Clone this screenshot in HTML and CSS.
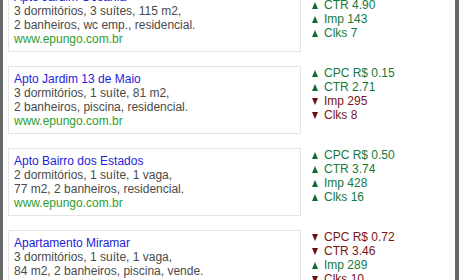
FILE: index.html
```html
<!DOCTYPE html>
<html>
<head>
	<title>Anuncios</title>
	<link rel="stylesheet" href="styles.css">
</head>
<body>
	<div class="frame">
		<div class="bar"></div>
		<div class="lista">
			<div class="linha">
				<div class="anuncio">
					<a class="titulo">Apto Jardim Oceania</a>
					<div class="desc">3 dormitórios, 3 suítes, 115 m2,</div>
					<div class="desc">2 banheiros, wc emp., residencial.</div>
					<div class="url">www.epungo.com.br</div>
				</div>
				<ul class="stats">
					<li class="up"><i></i>CPC R$ 0.42</li>
					<li class="up"><i></i>CTR 4.90</li>
					<li class="up"><i></i>Imp 143</li>
					<li class="up"><i></i>Clks 7</li>
				</ul>
			</div>
			<div class="linha">
				<div class="anuncio">
					<a class="titulo">Apto Jardim 13 de Maio</a>
					<div class="desc">3 dormitórios, 1 suíte, 81 m2,</div>
					<div class="desc">2 banheiros, piscina, residencial.</div>
					<div class="url">www.epungo.com.br</div>
				</div>
				<ul class="stats">
					<li class="up"><i></i>CPC R$ 0.15</li>
					<li class="up"><i></i>CTR 2.71</li>
					<li class="down"><i></i>Imp 295</li>
					<li class="down"><i></i>Clks 8</li>
				</ul>
			</div>
			<div class="linha">
				<div class="anuncio">
					<a class="titulo">Apto Bairro dos Estados</a>
					<div class="desc">2 dormitórios, 1 suíte, 1 vaga,</div>
					<div class="desc">77 m2, 2 banheiros, residencial.</div>
					<div class="url">www.epungo.com.br</div>
				</div>
				<ul class="stats">
					<li class="up"><i></i>CPC R$ 0.50</li>
					<li class="up"><i></i>CTR 3.74</li>
					<li class="up"><i></i>Imp 428</li>
					<li class="up"><i></i>Clks 16</li>
				</ul>
			</div>
			<div class="linha">
				<div class="anuncio">
					<a class="titulo">Apartamento Miramar</a>
					<div class="desc">3 dormitórios, 1 suíte, 1 vaga,</div>
					<div class="desc">84 m2, 2 banheiros, piscina, vende.</div>
					<div class="url">www.epungo.com.br</div>
				</div>
				<ul class="stats">
					<li class="down"><i></i>CPC R$ 0.72</li>
					<li class="down"><i></i>CTR 3.46</li>
					<li class="up"><i></i>Imp 289</li>
					<li class="down"><i></i>Clks 10</li>
				</ul>
			</div>
		</div>
		<div class="bar bar-dir"></div>
	</div>
</body>
</html>
```

FILE: styles.css
```css
html, body{
	margin: 0;
	height: 100%;
	overflow: hidden;
	background: #fff;
}

body{
	font-family: "Liberation Sans", Arial, sans-serif;
	font-size: 12px;
	line-height: 14px;
}

.frame{
	display: flex;
	height: 280px;
}

.bar{
	width: 3px;
	background-color: #686868;
	flex-shrink: 0;
}

.bar-dir{
	width: 4px;
}

.lista{
	flex: 1;
	margin-top: -16px;
	padding-left: 5px;
}

.linha{
	display: flex;
	align-items: flex-start;
	margin-bottom: 14px;
}

.anuncio{
	width: 281px;
	border: 1px solid #e4e4e4;
	padding: 5px 5px 5px 5px;
}

.titulo{
	display: block;
	color: #2323d8;
	text-decoration: none;
}

.desc{
	color: #4a4a4a;
}

.url{
	color: #2e9e2e;
}

.stats{
	list-style: none;
	margin: 0 0 0 11px;
	padding: 0;
}

.stats li{
	display: flex;
	align-items: center;
	height: 14px;
}

.stats li i{
	width: 0;
	height: 0;
	margin-right: 6px;
	border-left: 3.5px solid transparent;
	border-right: 3.5px solid transparent;
}

.up{
	color: #157a3e;
}

.up i{
	border-bottom: 7px solid #0f6b34;
}

.down{
	color: #7c1414;
}

.down i{
	border-top: 7px solid #6e0d0d;
}
```
